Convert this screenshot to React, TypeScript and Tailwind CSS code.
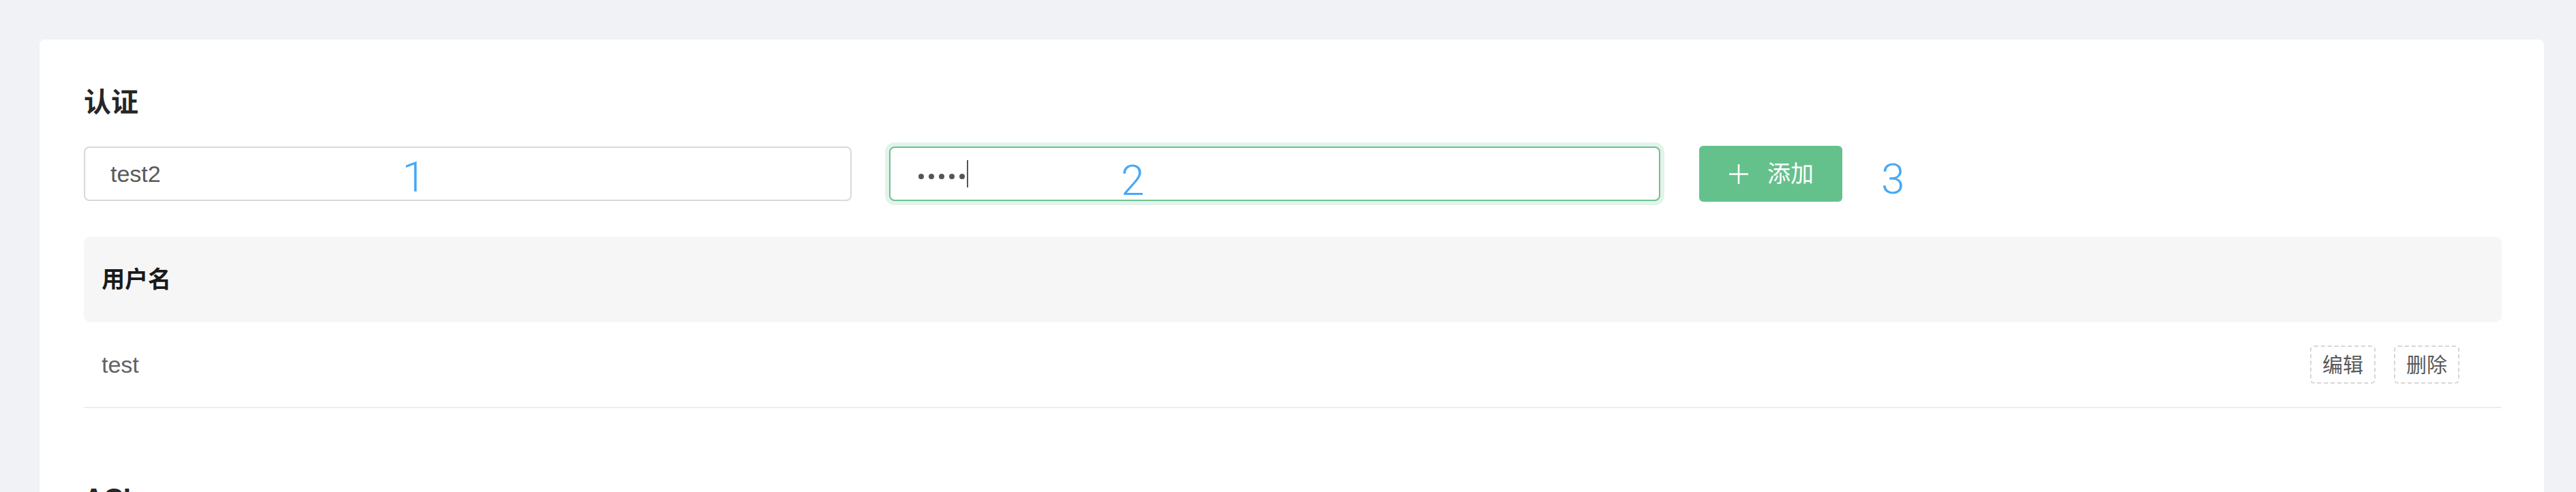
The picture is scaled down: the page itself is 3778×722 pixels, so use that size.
import React from 'react';

type User = {
  id: number;
  username: string;
};

const users: User[] = [{ id: 1, username: 'test' }];

const font = "font-['Liberation_Sans','Noto_Sans_CJK_SC',sans-serif]";

// little blue numbers sitting on top of the form (screenshot annotations)
function Marker({ n, className }: { n: string; className: string }) {
  return (
    <span className={`absolute leading-none text-[62px] font-light text-[#47a9f6] font-['Roboto',sans-serif] ${className}`}>
      {n}
    </span>
  );
}

function PlusIcon() {
  return (
    <svg width="28" height="29" viewBox="0 0 28 29" fill="none">
      <line x1="14" y1="0" x2="14" y2="29" stroke="white" strokeWidth="2.5" />
      <line x1="0" y1="14.5" x2="28" y2="14.5" stroke="white" strokeWidth="2.5" />
    </svg>
  );
}

export default function App() {
  return (
    <div className={`min-h-screen bg-[#f0f2f5] pl-[58px] pr-[47px] pt-[58px] ${font}`}>
      <div className="bg-white rounded-[8px] min-h-[900px] pl-[65px] pr-[62px] pt-[64px]">
        {/* auth section */}
        <h2 className="text-[40px] leading-[56px] font-semibold text-[#262626]">认证</h2>

        <div className="relative mt-[36px] flex items-center h-[82px]">
          <input
            readOnly
            value="test2"
            className="w-[1126px] h-[80px] border-2 border-[#d9d9d9] rounded-[8px] px-[37px] text-[34px] text-[#595959] outline-none"
          />
          <div className="ml-[55px] w-[1131px] h-[80px] border-2 border-[#6cc092] rounded-[8px] shadow-[0_0_0_6px_#e3f3ea] flex items-center pl-[41px]">
            <div className="flex items-center gap-[7px] mt-[8px]">
              {[0, 1, 2, 3, 4].map((i) => (
                <span key={i} className="w-[8px] h-[8px] rounded-full bg-[#555]" />
              ))}
            </div>
            <span className="ml-[3px] w-[2px] h-[40px] bg-[#555]" />
          </div>
          <button className="ml-[57px] h-[82px] w-[210px] rounded-[6px] bg-[#65c18c] flex items-center pl-[44px] gap-[28px] text-white text-[34px]">
            <PlusIcon />
            <span>添加</span>
          </button>

          <Marker n="1" className="left-[467px] top-[15px]" />
          <Marker n="2" className="left-[1521px] top-[20px]" />
          <Marker n="3" className="left-[2636px] top-[18px]" />
        </div>

        {/* user table */}
        <div className="mt-[51px]">
          <div className="h-[126px] bg-[#f6f6f6] rounded-[10px] flex items-center pl-[26px]">
            <span className="text-[34px] font-bold text-[#1a1a1a]">用户名</span>
          </div>
          {users.map((u) => (
            <div key={u.id} className="h-[126px] border-b-2 border-[#ecedf1] flex items-center justify-between pl-[26px] pr-[62px]">
              <span className="text-[34px] text-[#606266]">{u.username}</span>
              <div className="flex items-center gap-[27px]">
                <button className="h-[56px] px-[16px] border-2 border-dashed border-[#d6d6d6] rounded-[6px] text-[30px] text-[#595959] flex items-center">
                  编辑
                </button>
                <button className="h-[56px] px-[16px] border-2 border-dashed border-[#d6d6d6] rounded-[6px] text-[30px] text-[#595959] flex items-center">
                  删除
                </button>
              </div>
            </div>
          ))}
        </div>

        {/* acl section */}
        <h2 className="mt-[104px] text-[40px] leading-[56px] font-semibold text-[#262626]">ACL</h2>
      </div>
    </div>
  );
}
